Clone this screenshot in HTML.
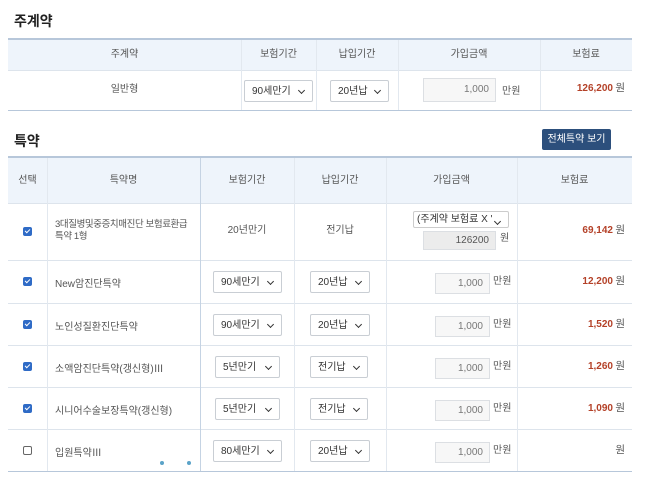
<!DOCTYPE html>
<html><head><meta charset="utf-8"><style>
*{margin:0;padding:0;box-sizing:border-box}
body{width:645px;height:485px;background:#fff;position:relative;overflow:hidden;font-family:"Liberation Sans","Noto Sans CJK KR",sans-serif;color:#555;font-size:10px}
.a{position:absolute;white-space:nowrap}
.t{font-weight:bold;font-size:14px;color:#222}
.hl{position:absolute;height:1px;background:#dde4ec}
.vl{position:absolute;width:1px;background:#e2e8ef}
.hd{position:absolute;background:#eef4fb}
.c{position:absolute;text-align:center;line-height:14px}
.sel{position:absolute;height:22px;border:1px solid #c9ced4;background:#fff;font-size:10px;color:#333;line-height:21px;padding-left:7px;border-radius:2px;white-space:nowrap;overflow:hidden}
.sel:after{content:"";position:absolute;right:8px;top:7px;width:4px;height:4px;border-right:1.5px solid #333;border-bottom:1.5px solid #333;transform:rotate(45deg)}
.inp{position:absolute;height:21px;border:1px solid #dcdfe3;background:#f7f7f7;text-align:right;padding-right:6px;line-height:19px;color:#777;font-size:10px}
.pr{position:absolute;right:32px;color:#b44128;font-weight:bold;font-size:10px;line-height:14px}
.won{position:absolute;right:20px;font-size:10.5px;line-height:14px;margin-top:-1px}
.cb{position:absolute;left:23px;width:9px;height:9px;border-radius:2px;background:#2f6bc6}
.cb:after{content:"";position:absolute;left:3px;top:1px;width:2px;height:4px;border-right:1.5px solid #fff;border-bottom:1.5px solid #fff;transform:rotate(45deg)}
.cbn{position:absolute;left:23px;width:9px;height:9px;border:1px solid #666;border-radius:2px;background:#fff}
</style></head><body>
<div class="a t" style="left:14px;top:11px">주계약</div>
<div class="hd" style="left:8px;top:39px;width:624px;height:31px"></div>
<div class="a" style="left:8px;top:38px;width:624px;height:2px;background:#b7c7da"></div>
<div class="hl" style="left:8px;top:70px;width:624px"></div>
<div class="a" style="left:8px;top:110px;width:624px;height:1px;background:#b7c7da"></div>
<div class="vl" style="left:241px;top:40px;height:70px"></div>
<div class="vl" style="left:316px;top:40px;height:70px"></div>
<div class="vl" style="left:398px;top:40px;height:70px"></div>
<div class="vl" style="left:540px;top:40px;height:70px"></div>
<div class="c" style="left:8px;width:233px;top:48px">주계약</div>
<div class="c" style="left:241px;width:75px;top:48px">보험기간</div>
<div class="c" style="left:316px;width:82px;top:48px">납입기간</div>
<div class="c" style="left:398px;width:142px;top:48px">가입금액</div>
<div class="c" style="left:540px;width:92px;top:48px">보험료</div>
<div class="c" style="left:8px;width:233px;top:83px">일반형</div>
<div class="sel" style="left:244px;top:80px;width:69px">90세만기</div>
<div class="sel" style="left:330px;top:80px;width:59px">20년납</div>
<div class="inp" style="left:423px;top:78px;width:73px;height:24px;line-height:22px">1,000</div>
<div class="a" style="left:502px;top:82px">만원</div>
<div class="pr" style="top:82px">126,200</div><div class="won" style="top:82px">원</div>

<div class="a t" style="left:14px;top:131px">특약</div>
<div class="a" style="left:542px;top:129px;width:69px;height:21px;background:#2c4f7c;color:#fff;font-size:10px;text-align:center;line-height:21px;border-radius:2px">전체특약 보기</div>

<div class="hd" style="left:8px;top:157px;width:624px;height:46px"></div>
<div class="a" style="left:8px;top:156px;width:624px;height:2px;background:#b7c7da"></div>
<div class="hl" style="left:8px;top:203px;width:624px"></div>
<div class="hl" style="left:8px;top:260px;width:624px"></div>
<div class="hl" style="left:8px;top:303px;width:624px"></div>
<div class="hl" style="left:8px;top:345px;width:624px"></div>
<div class="hl" style="left:8px;top:387px;width:624px"></div>
<div class="hl" style="left:8px;top:429px;width:624px"></div>
<div class="a" style="left:8px;top:471px;width:624px;height:1px;background:#b7c7da"></div>
<div class="vl" style="left:47px;top:158px;height:313px"></div>
<div class="vl" style="left:200px;top:158px;height:313px;background:#c5d3e3"></div>
<div class="vl" style="left:294px;top:158px;height:313px"></div>
<div class="vl" style="left:386px;top:158px;height:313px"></div>
<div class="vl" style="left:517px;top:158px;height:313px"></div>
<div class="c" style="left:8px;width:39px;top:174px">선택</div>
<div class="c" style="left:47px;width:153px;top:174px">특약명</div>
<div class="c" style="left:200px;width:94px;top:174px">보험기간</div>
<div class="c" style="left:294px;width:92px;top:174px">납입기간</div>
<div class="c" style="left:386px;width:131px;top:174px">가입금액</div>
<div class="c" style="left:517px;width:115px;top:174px">보험료</div>

<div class="cb" style="top:227px"></div>
<div class="a" style="left:55px;top:219px;line-height:12px;font-size:9.5px;letter-spacing:-0.4px">3대질병및중증치매진단 보험료환급<br>특약 1형</div>
<div class="c" style="left:200px;width:94px;top:224px">20년만기</div>
<div class="c" style="left:294px;width:92px;top:224px">전기납</div>
<div class="sel" style="left:413px;top:211px;width:96px;height:17px;line-height:15px;padding-left:3px;border-color:#ccc">(주계약 보험료 X '</div>
<div class="inp" style="left:423px;top:231px;width:73px;height:19px;line-height:17px;background:#ececec;color:#555">126200</div>
<div class="a" style="left:500px;top:229px">원</div>
<div class="pr" style="top:224px">69,142</div><div class="won" style="top:224px">원</div>

<div class="cb" style="top:277px"></div>
<div class="a" style="left:55px;top:275px">New암진단특약</div>
<div class="sel" style="left:213px;top:271px;width:69px">90세만기</div>
<div class="sel" style="left:310px;top:271px;width:60px">20년납</div>
<div class="inp" style="left:435px;top:273px;width:55px">1,000</div>
<div class="a" style="left:493px;top:272px">만원</div>
<div class="pr" style="top:275px">12,200</div><div class="won" style="top:275px">원</div>

<div class="cb" style="top:320px"></div>
<div class="a" style="left:55px;top:318px">노인성질환진단특약</div>
<div class="sel" style="left:213px;top:314px;width:69px">90세만기</div>
<div class="sel" style="left:310px;top:314px;width:60px">20년납</div>
<div class="inp" style="left:435px;top:316px;width:55px">1,000</div>
<div class="a" style="left:493px;top:315px">만원</div>
<div class="pr" style="top:318px">1,520</div><div class="won" style="top:318px">원</div>

<div class="cb" style="top:362px"></div>
<div class="a" style="left:55px;top:360px">소액암진단특약(갱신형)Ⅲ</div>
<div class="sel" style="left:215px;top:356px;width:65px">5년만기</div>
<div class="sel" style="left:310px;top:356px;width:58px">전기납</div>
<div class="inp" style="left:435px;top:358px;width:55px">1,000</div>
<div class="a" style="left:493px;top:357px">만원</div>
<div class="pr" style="top:360px">1,260</div><div class="won" style="top:360px">원</div>

<div class="cb" style="top:404px"></div>
<div class="a" style="left:55px;top:402px">시니어수술보장특약(갱신형)</div>
<div class="sel" style="left:215px;top:398px;width:65px">5년만기</div>
<div class="sel" style="left:310px;top:398px;width:58px">전기납</div>
<div class="inp" style="left:435px;top:400px;width:55px">1,000</div>
<div class="a" style="left:493px;top:399px">만원</div>
<div class="pr" style="top:402px">1,090</div><div class="won" style="top:402px">원</div>

<div class="cbn" style="top:446px"></div>
<div class="a" style="left:55px;top:444px">입원특약Ⅲ</div>
<div class="sel" style="left:213px;top:440px;width:69px">80세만기</div>
<div class="sel" style="left:310px;top:440px;width:60px">20년납</div>
<div class="inp" style="left:435px;top:442px;width:55px">1,000</div>
<div class="a" style="left:493px;top:441px">만원</div>
<div class="won" style="top:444px">원</div>

<div class="a" style="left:160px;top:461px;width:4px;height:4px;border-radius:50%;background:#5ba3c8"></div>
<div class="a" style="left:187px;top:461px;width:4px;height:4px;border-radius:50%;background:#5ba3c8"></div>
</body></html>
